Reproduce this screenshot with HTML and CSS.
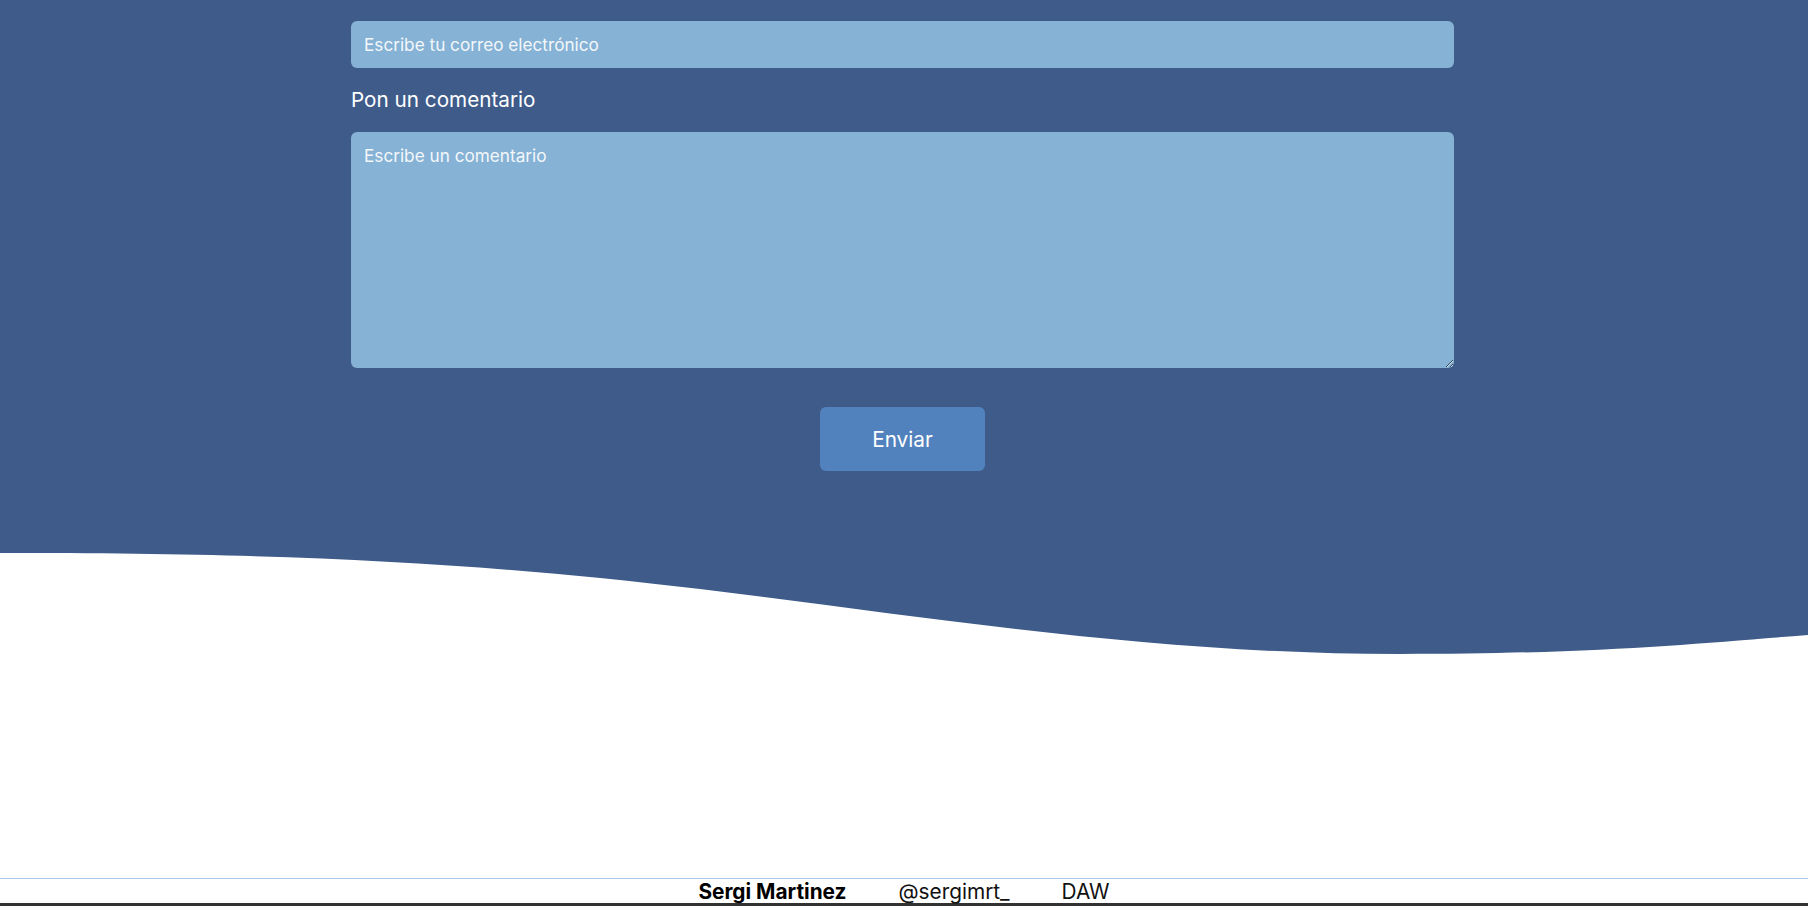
FILE: index.html
```html
<!DOCTYPE html>
<html lang="es">
<head>
<meta charset="utf-8">
<title>Contacto</title>
<link rel="stylesheet" href="styles.css">
</head>
<body>
<div class="page">
  <section class="contact">
    <form class="contact-form">
      <input class="field" type="email" placeholder="Escribe tu correo electrónico">
      <label class="label" for="comentario">Pon un comentario</label>
      <textarea class="field area" id="comentario" placeholder="Escribe un comentario"></textarea>
      <div class="actions">
        <button class="send" type="button">Enviar</button>
      </div>
    </form>
  </section>
  <svg class="wave" viewBox="0 0 1808 102" preserveAspectRatio="none" aria-hidden="true">
    <path d="M0,0 C300,0 480,10 700,36 C930,64 1150,101 1400,101 C1600,101 1700,90 1808,82 L1808,0 Z" fill="#3e5b8a"/>
  </svg>
  <footer class="footer">
    <span class="name">Sergi Martinez</span>
    <span class="item">@sergimrt_</span>
    <span class="item">DAW</span>
  </footer>
</div>
</body>
</html>
```

FILE: styles.css
```css
* { box-sizing: border-box; }

html, body {
  margin: 0;
  padding: 0;
}

body {
  font-family: "Inter", "Liberation Sans", sans-serif;
  background: #ffffff;
  color: #111111;
}

.page {
  display: flex;
  flex-direction: column;
  min-height: 100vh;
  height: 906px;
}

.contact {
  background: #3e5b8a;
  padding: 21px 3px 82px 0;
}

.contact-form {
  width: 1103px;
  margin: 0 auto;
  display: flex;
  flex-direction: column;
}

.field {
  display: block;
  width: 100%;
  border: none;
  outline: none;
  border-radius: 6px;
  background: #85b2d5;
  color: #ffffff;
  font-family: "Inter", "Liberation Sans", sans-serif;
  font-size: 17.2px;
  line-height: 21.3px;
  padding: 12.8px 13px;
}

.field::placeholder {
  color: #f4f7fa;
  opacity: 1;
}

.label {
  color: #ffffff;
  font-size: 20.7px;
  line-height: 25px;
  margin: 19px 0 20px;
}

.area {
  height: 236px;
  resize: both;
  margin: 0;
}

.actions {
  display: flex;
  justify-content: center;
  margin-top: 39px;
}

.send {
  width: 165px;
  height: 64px;
  border: none;
  border-radius: 6px;
  background: #5282bd;
  color: #ffffff;
  font-family: "Inter", "Liberation Sans", sans-serif;
  font-size: 20.8px;
  line-height: 25px;
  padding: 1px 0 0;
  cursor: pointer;
}

.wave {
  display: block;
  width: 100%;
  height: 102px;
}

.footer {
  margin-top: auto;
  display: flex;
  justify-content: center;
  gap: 52px;
  border-top: 1px solid #a8cce9;
  border-bottom: 3px solid #333333;
  font-size: 20.8px;
  line-height: 23px;
  padding-top: 1px;
  color: #111111;
}

.name {
  font-weight: 700;
  color: #000000;
}
```
